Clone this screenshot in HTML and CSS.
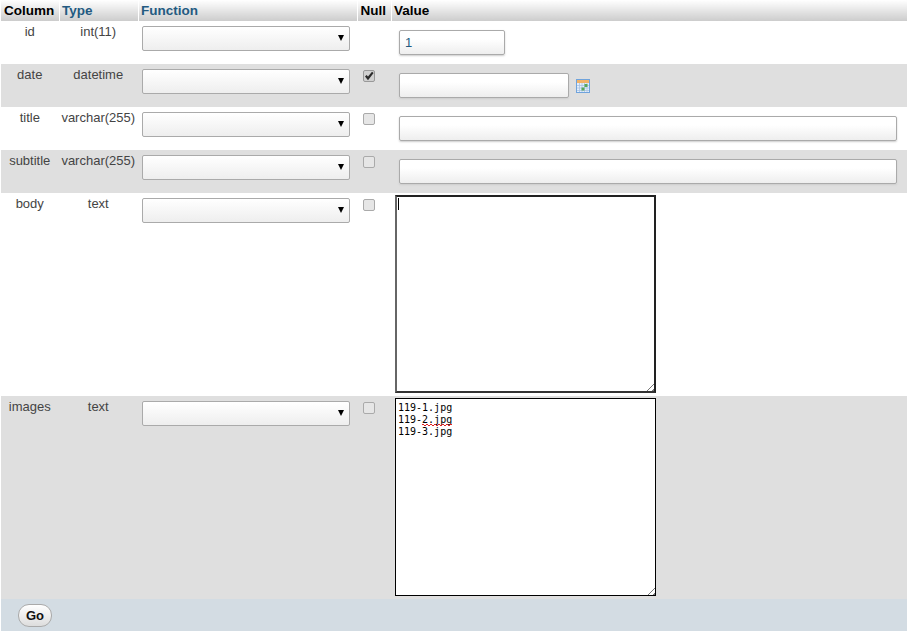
FILE: index.html
```html
<!DOCTYPE html>
<html lang="en">
<head>
<meta charset="utf-8">
<title>Insert row</title>
<link rel="stylesheet" href="styles.css">
</head>
<body>
<form class="page">
<table class="grid">
<colgroup>
<col class="c-col"><col class="c-type"><col class="c-fn"><col class="c-null"><col class="c-val">
</colgroup>
<thead>
<tr>
<th>Column</th>
<th class="link">Type</th>
<th class="link">Function</th>
<th>Null</th>
<th class="tight">Value</th>
</tr>
</thead>
<tbody>
<tr class="row">
<td class="name">id</td>
<td class="name">int(11)</td>
<td class="fn"><div class="select"><svg class="arrow" viewBox="0 0 6 6" width="6" height="6"><path d="M0 0h6L3 6z"/></svg></div></td>
<td class="null"></td>
<td class="val"><input class="text id-input" type="text" value="1"></td>
</tr>
<tr class="row even">
<td class="name">date</td>
<td class="name">datetime</td>
<td class="fn"><div class="select"><svg class="arrow" viewBox="0 0 6 6" width="6" height="6"><path d="M0 0h6L3 6z"/></svg></div></td>
<td class="null"><span class="check checked"><svg viewBox="0 0 12 12" width="12" height="12"><path d="M2 6.4 3.6 5 5 6.6 9 1.8 10.6 3 5 10.2z" fill="#2b2b2b"/></svg></span></td>
<td class="val"><div class="date-wrap"><input class="text date-input" type="text">
<svg class="cal" viewBox="0 0 14 14" width="14" height="14">
<rect x=".5" y=".5" width="13" height="13" fill="#e4eefa" stroke="#6fa3dc"/>
<rect x="1" y="1" width="12" height="3" fill="#f2b266"/>
<path d="M1 6.5h12M1 9h12M1 11.5h12M3.5 4v9M6 4v9M8.5 4v9M11 4v9" stroke="#a9c3e3" stroke-width=".8"/>
<rect x="8.5" y="5" width="3" height="3" fill="#5aa85a"/>
<rect x="5.5" y="8.5" width="3" height="3" fill="#5aa85a"/>
</svg></div></td>
</tr>
<tr class="row">
<td class="name">title</td>
<td class="name">varchar(255)</td>
<td class="fn"><div class="select"><svg class="arrow" viewBox="0 0 6 6" width="6" height="6"><path d="M0 0h6L3 6z"/></svg></div></td>
<td class="null"><span class="check"></span></td>
<td class="val"><input class="text wide-input" type="text"></td>
</tr>
<tr class="row even">
<td class="name">subtitle</td>
<td class="name">varchar(255)</td>
<td class="fn"><div class="select"><svg class="arrow" viewBox="0 0 6 6" width="6" height="6"><path d="M0 0h6L3 6z"/></svg></div></td>
<td class="null"><span class="check"></span></td>
<td class="val"><input class="text wide-input" type="text"></td>
</tr>
<tr class="row tall">
<td class="name">body</td>
<td class="name">text</td>
<td class="fn"><div class="select"><svg class="arrow" viewBox="0 0 6 6" width="6" height="6"><path d="M0 0h6L3 6z"/></svg></div></td>
<td class="null"><span class="check"></span></td>
<td class="area-cell"><div class="area focus"><span class="caret"></span></div></td>
</tr>
<tr class="row tall even">
<td class="name">images</td>
<td class="name">text</td>
<td class="fn"><div class="select"><svg class="arrow" viewBox="0 0 6 6" width="6" height="6"><path d="M0 0h6L3 6z"/></svg></div></td>
<td class="null"><span class="check"></span></td>
<td class="area-cell"><div class="area">119-1.jpg
119-2.jpg
119-3.jpg<span class="squiggle"></span></div></td>
</tr>
</tbody>
<tfoot>
<tr>
<td class="foot" colspan="5"><button class="go" type="button">Go</button></td>
</tr>
</tfoot>
</table>
</form>
</body>
</html>
```
FILE: styles.css
```css
html, body {
  margin: 0;
  padding: 0;
  background: #fff;
}
body {
  font-family: "Liberation Sans", Arial, sans-serif;
  font-size: 13px;
  color: #444;
}
.page {
  padding-left: 1px;
  width: 906px;
}
.grid {
  width: 906px;
  table-layout: fixed;
  border-collapse: collapse;
  border-spacing: 0;
}
.c-col { width: 58px; }
.c-type { width: 79px; }
.c-fn { width: 219px; }
.c-null { width: 34px; }
.grid th {
  height: 21px;
  padding: 0 0 0 3px;
  box-sizing: border-box;
  text-align: left;
  font-size: 13.5px;
  font-weight: bold;
  color: #000;
  background: linear-gradient(#fff, #ccc);
  border-right: 1px solid #fff;
  vertical-align: middle;
}
.grid th:last-child { border-right: 0; }
.grid th.link { color: #235a81; padding-left: 2.5px; }
.grid th.tight { padding-left: 2.5px; }
.grid td {
  padding: 0;
  vertical-align: top;
}
.row { height: 43px; }
.row.tall { height: 203px; }
.even { background: #dfdfdf; }
.name {
  text-align: center;
  padding: 3px 0.5px 0 0 !important;
  line-height: 15px;
}
.fn { padding: 5px 0 0 4px !important; }
.select {
  position: relative;
  width: 208px;
  height: 25px;
  box-sizing: border-box;
  border: 1px solid #aaa;
  border-radius: 2px;
  background: linear-gradient(#fff, #eee);
}
.arrow {
  position: absolute;
  right: 5px;
  top: 8px;
  fill: #000;
}
.null { padding: 6px 0 0 6px !important; }
.check {
  display: block;
  width: 12px;
  height: 12px;
  box-sizing: border-box;
  border: 1px solid #aaa;
  border-radius: 2px;
  background: #e6e6e6;
}
.check.checked {
  background: #d0d0d0;
  border-color: #999;
}
.check svg {
  display: block;
  margin: -1px;
}
.val { padding: 9px 0 0 8px !important; }
.text {
  display: block;
  box-sizing: border-box;
  height: 25px;
  margin: 0;
  padding: 1px 5px;
  border: 1px solid #aaa;
  border-radius: 2px;
  background: linear-gradient(#fff 35%, #eee);
  box-shadow: 0 1px 2px #ccc;
  font-family: "Liberation Sans", Arial, sans-serif;
  font-size: 13px;
  color: #235a81;
}
.id-input { width: 106px; }
.date-input { width: 170px; }
.wide-input { width: 498px; }
.date-wrap {
  display: flex;
  align-items: flex-start;
  gap: 7px;
}
.cal { margin-top: 6px; }
.area-cell { padding: 2px 0 0 4px !important; }
.area {
  position: relative;
  width: 261px;
  height: 198px;
  box-sizing: border-box;
  padding: 3px 2px 2px;
  border: 1px solid #000;
  background: #fff;
  font-family: "DejaVu Sans Mono", monospace;
  font-size: 10px;
  line-height: 12px;
  color: #000;
  white-space: pre;
}
.area.focus {
  padding: 1px;
  border-width: 2px;
  border-color: #222 #222 #333 #666;
}
.area::after {
  content: "";
  position: absolute;
  right: 0;
  bottom: 0;
  width: 11px;
  height: 11px;
  background: repeating-linear-gradient(135deg, transparent 0 2px, #777 2px 3px, transparent 3px 4px);
  clip-path: polygon(100% 0, 100% 100%, 0 100%);
}
.caret {
  display: block;
  width: 1px;
  height: 12px;
  background: #000;
}
.squiggle {
  position: absolute;
  left: 26px;
  top: 25px;
  width: 30px;
  height: 2px;
  background:
    repeating-linear-gradient(90deg, #e02020 0 2px, transparent 2px 4px) 0 0 / 100% 1px no-repeat,
    repeating-linear-gradient(90deg, transparent 0 2px, #e02020 2px 4px) 0 1px / 100% 1px no-repeat;
}
.foot {
  height: 32px;
  padding: 0 0 0 17px !important;
  background: #d3dce3;
  vertical-align: middle !important;
}
.go {
  display: block;
  width: 34px;
  height: 23px;
  padding: 0;
  border: 1px solid #aaa;
  border-radius: 11px;
  background: linear-gradient(#fff, #ddd);
  font-family: "Liberation Sans", Arial, sans-serif;
  font-size: 13px;
  font-weight: bold;
  color: #111;
}
```
